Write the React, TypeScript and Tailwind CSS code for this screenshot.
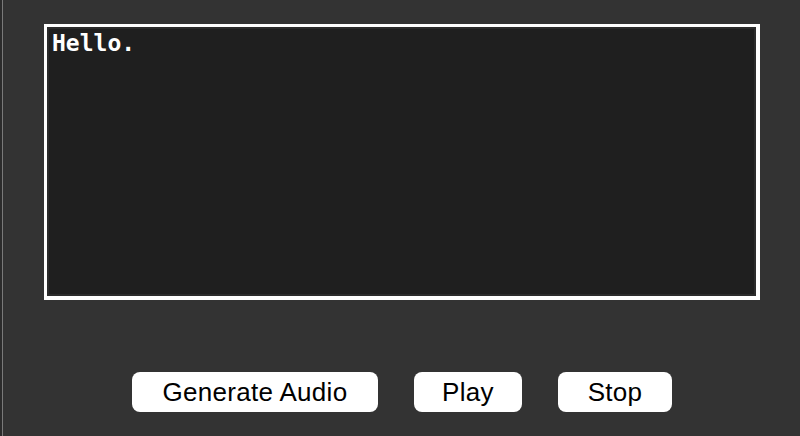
export default function App() {
  return (
    <div className="h-[436px] w-[800px] bg-[#333333] flex">
      {/* left edge of the window */}
      <div className="w-[2px] bg-[#2c2c2c]" />
      <div className="w-px bg-[#7a7a7a]" />

      <div className="flex flex-col pl-[41px] pt-6">
        {/* text area */}
        <div className="w-[716px] h-[276px] border-[3px] border-r-4 border-b-4 border-white bg-[#2c2c2c] p-[2px]">
          <div className="h-full bg-[#1f1f1f] px-[3px] text-white text-[23px] leading-7 font-semibold font-['DejaVu_Sans_Mono',monospace]">
            Hello.
          </div>
        </div>

        {/* buttons */}
        <div className="mt-[72px] flex justify-center gap-9 font-['Liberation_Sans',Arial,sans-serif] text-[26px] tracking-[0.3px] text-black">
          <button className="w-[246px] h-10 bg-white rounded-lg">Generate Audio</button>
          <button className="w-[108px] h-10 bg-white rounded-lg">Play</button>
          <button className="w-[114px] h-10 bg-white rounded-lg">Stop</button>
        </div>
      </div>
    </div>
  );
}
